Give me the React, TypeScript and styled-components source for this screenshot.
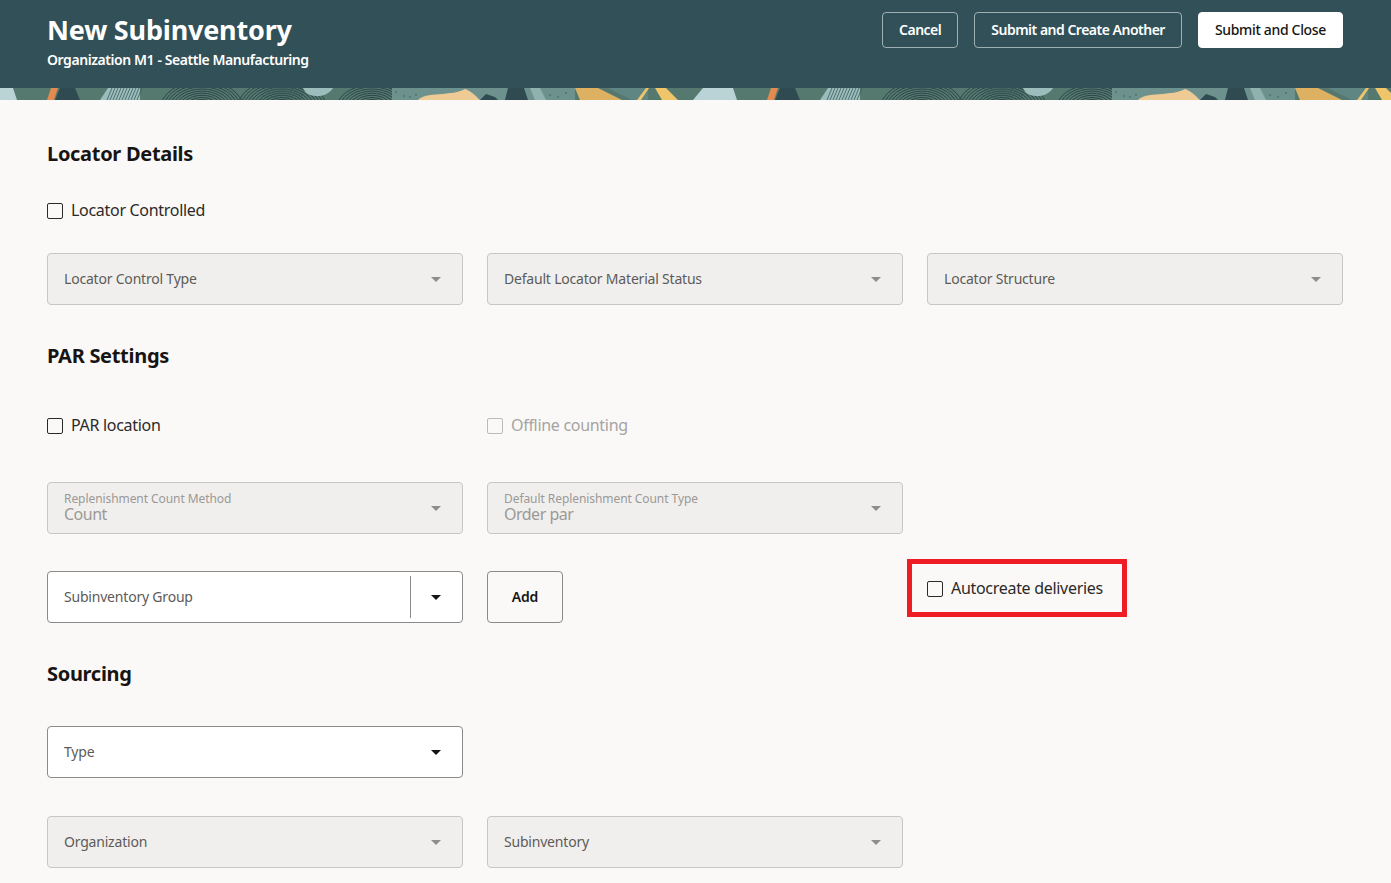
import React from 'react';
import styled, { createGlobalStyle } from 'styled-components';

const FONT = '"Noto Sans", "Open Sans", "Liberation Sans", sans-serif';

const GlobalStyle = createGlobalStyle`
  html, body {
    margin: 0;
    padding: 0;
    height: 883px;
    overflow: hidden;
    background: #fbf9f8;
    font-family: ${FONT};
    color: #161513;
  }
  * { box-sizing: border-box; }
`;

const Page = styled.div`
  width: 1391px;
  height: 883px;
  overflow: hidden;
`;

const Header = styled.header`
  height: 88px;
  background: #325057;
  padding: 12px 48px 0 47px;
  display: flex;
  justify-content: space-between;
  align-items: flex-start;
`;

const Titles = styled.div`
  color: #fff;
`;

const Title = styled.h1`
  margin: 0;
  font-size: 27px;
  line-height: 36px;
  font-weight: 700;
  letter-spacing: -0.2px;
`;

const Subtitle = styled.div`
  font-size: 14px;
  line-height: 20px;
  font-weight: 600;
  letter-spacing: -0.43px;
  margin-top: 2px;
`;

const Actions = styled.div`
  display: flex;
  gap: 16px;
`;

const HeaderButton = styled.button<{ $solid?: boolean }>`
  height: 36px;
  padding: 0 16px 2px;
  border-radius: 4px;
  font-family: ${FONT};
  font-size: 14px;
  font-weight: ${p => (p.$solid ? 500 : 600)};
  letter-spacing: ${p => (p.$solid ? '-0.33px' : '-0.5px')};
  color: ${p => (p.$solid ? '#161513' : '#fff')};
  background: ${p => (p.$solid ? '#fff' : 'transparent')};
  border: 1px solid ${p => (p.$solid ? '#fff' : '#9fb0b3')};
`;

const Banner = styled.div`
  height: 12px;
  overflow: hidden;
  display: flex;
  background: #55796f;
`;

// concentric rings of the fingerprint motif, cut off by the banner height
const Rings = ({ cx, cy, from, to, step = 3 }: { cx: number; cy: number; from: number; to: number; step?: number }) => {
  const radii: number[] = [];
  for (let r = from; r <= to; r += step) radii.push(r);
  return (
    <g fill="none" stroke="#2c4548" strokeWidth="1">
      {radii.map(r => (
        <ellipse key={r} cx={cx} cy={cy} rx={r} ry={r * 0.7} />
      ))}
    </g>
  );
};

const Hatch = ({ x, to, stroke = '#3b5a5c' }: { x: number; to: number; stroke?: string }) => {
  const lines: number[] = [];
  for (let i = x; i <= to; i += 3) lines.push(i);
  return (
    <g stroke={stroke} strokeWidth="0.8">
      {lines.map(i => (
        <line key={i} x1={i} y1="0" x2={i - 5} y2="12" />
      ))}
    </g>
  );
};

const Spots = ({ at }: { at: [number, number][] }) => (
  <g fill="#4f7470">
    {at.map(([x, y]) => (
      <circle key={`${x}-${y}`} cx={x} cy={y} r="1" />
    ))}
  </g>
);

const BannerTile = () => (
  <svg width="720" height="12" viewBox="0 0 720 12" style={{ flex: 'none' }}>
    <rect width="720" height="12" fill="#55796f" />
    <path d="M0 0h13l4 12H0z" fill="#b9d3d6" />
    <path d="M47 12l4-12h7l-4 12z" fill="#e28a4f" />
    <path d="M55 12l5-12h15l5 12z" fill="#2f4a50" />
    <path d="M100 12l8-12h32v12z" fill="#9dbdbd" />
    <Hatch x={112} to={142} />
    <Rings cx={202} cy={22} from={12} to={42} />
    <Rings cx={282} cy={22} from={12} to={45} />
    <Hatch x={266} to={306} />
    <path d="M303 0h30c-3 5-10 9-18 8s-10-4-12-8z" fill="#9dbdbd" />
    <Rings cx={372} cy={22} from={12} to={36} />
    <rect x="392" width="183" height="12" fill="#6d928d" />
    <Spots at={[[404, 8], [410, 9], [416, 7], [396, 4], [550, 7], [558, 9], [566, 5]]} />
    <path d="M418 12c6-6 16-5 24-6s16-1 23-5c4 1 10 6 15 11z" fill="#eecb94" />
    <path d="M480 12l6-6 9 3 3 3z" fill="#2f4a50" />
    <path d="M508 0h16l4 12h-23z" fill="#2f4a50" />
    <path d="M530 0h10l6 12h-11z" fill="#8fb1b0" />
    <path d="M575 0h23l22 11 2 1h-42z" fill="#deb062" />
    <path d="M608 0h40v12h-16z" fill="#5f8682" />
    <path d="M637 12l9-12h3l-8 12zM655 0h11l12 12h-16z" fill="#f0c468" />
    <path d="M693 12l10-12h17v12z" fill="#b9d3d6" />
  </svg>
);

const Content = styled.main`
  padding: 0 48px 0 47px;
`;

const SectionTitle = styled.h2<{ $top: number; $bottom: number }>`
  margin: ${p => p.$top}px 0 ${p => p.$bottom}px;
  font-size: 20px;
  line-height: 28px;
  font-weight: 700;
  letter-spacing: -0.3px;
`;

const Row = styled.div<{ $bottom?: number }>`
  display: grid;
  grid-template-columns: repeat(3, 416px);
  column-gap: 24px;
  align-items: center;
  margin-bottom: ${p => p.$bottom ?? 0}px;
`;

const CheckRow = styled.label<{ $disabled?: boolean }>`
  display: flex;
  align-items: center;
  gap: 8px;
  height: 24px;
  font-size: 16px;
  letter-spacing: -0.3px;
  color: ${p => (p.$disabled ? '#a5a4a2' : '#2b2a28')};
`;

const Box = styled.span<{ $disabled?: boolean }>`
  width: 16px;
  height: 16px;
  margin-top: 1px;
  border-radius: 2px;
  border: 1.5px solid ${p => (p.$disabled ? '#bdbbb8' : '#2b2a28')};
`;

const Field = styled.div<{ $enabled?: boolean }>`
  height: 52px;
  padding: 0 16px;
  display: flex;
  align-items: center;
  justify-content: space-between;
  border-radius: 4px;
  background: ${p => (p.$enabled ? '#fff' : '#f1efed')};
  border: 1px solid ${p => (p.$enabled ? '#8b8a88' : '#c9c7c5')};
`;

const FieldLabel = styled.span`
  margin-top: -2px;
  font-size: 14px;
  letter-spacing: -0.2px;
  color: #5c5b59;
`;

const FieldStack = styled.div`
  display: flex;
  flex-direction: column;
  margin-top: -2px;
`;

const SmallLabel = styled.span`
  font-size: 12px;
  line-height: 14px;
  letter-spacing: -0.07px;
  color: #9a9997;
`;

const FieldValue = styled.span`
  font-size: 16px;
  line-height: 17px;
  letter-spacing: -0.5px;
  color: #9a9997;
`;

const Caret = styled.span<{ $dark?: boolean }>`
  width: 0;
  height: 0;
  margin-right: 5px;
  border-left: 5px solid transparent;
  border-right: 5px solid transparent;
  border-top: 5px solid ${p => (p.$dark ? '#161513' : '#8e8d8b')};
`;

const ComboField = styled(Field)`
  padding-right: 0;
`;

const ComboToggle = styled.div`
  width: 52px;
  height: 42px;
  border-left: 1px solid #8b8a88;
  display: flex;
  align-items: center;
  justify-content: center;
  padding-left: 4px;
`;

const AddButton = styled.button`
  width: 76px;
  height: 52px;
  padding-bottom: 2px;
  border-radius: 4px;
  border: 1px solid #8b8a88;
  background: transparent;
  font-family: ${FONT};
  font-size: 14px;
  font-weight: 600;
  letter-spacing: -0.2px;
  color: #161513;
`;

const Highlight = styled.div`
  align-self: start;
  width: 220px;
  height: 58px;
  margin: -12px 0 0 -20px;
  padding-left: 15px;
  border: 5px solid #ee1c25;
  display: flex;
  align-items: center;
`;

const SelectField = ({ label }: { label: string }) => (
  <Field>
    <FieldLabel>{label}</FieldLabel>
    <Caret />
  </Field>
);

const FilledField = ({ label, value }: { label: string; value: string }) => (
  <Field>
    <FieldStack>
      <SmallLabel>{label}</SmallLabel>
      <FieldValue>{value}</FieldValue>
    </FieldStack>
    <Caret />
  </Field>
);

export default function App() {
  return (
    <Page>
      <GlobalStyle />
      <Header>
        <Titles>
          <Title>New Subinventory</Title>
          <Subtitle>Organization M1 - Seattle Manufacturing</Subtitle>
        </Titles>
        <Actions>
          <HeaderButton>Cancel</HeaderButton>
          <HeaderButton>Submit and Create Another</HeaderButton>
          <HeaderButton $solid>Submit and Close</HeaderButton>
        </Actions>
      </Header>
      <Banner>
        <BannerTile />
        <BannerTile />
      </Banner>
      <Content>
        <SectionTitle $top={40} $bottom={30}>Locator Details</SectionTitle>
        <Row $bottom={31}>
          <CheckRow><Box />Locator Controlled</CheckRow>
        </Row>
        <Row>
          <SelectField label="Locator Control Type" />
          <SelectField label="Default Locator Material Status" />
          <SelectField label="Locator Structure" />
        </Row>
        <SectionTitle $top={37} $bottom={43}>PAR Settings</SectionTitle>
        <Row $bottom={45}>
          <CheckRow><Box />PAR location</CheckRow>
          <CheckRow $disabled><Box $disabled />Offline counting</CheckRow>
        </Row>
        <Row $bottom={37}>
          <FilledField label="Replenishment Count Method" value="Count" />
          <FilledField label="Default Replenishment Count Type" value="Order par" />
        </Row>
        <Row>
          <ComboField $enabled>
            <FieldLabel>Subinventory Group</FieldLabel>
            <ComboToggle><Caret $dark /></ComboToggle>
          </ComboField>
          <AddButton>Add</AddButton>
          <Highlight>
            <CheckRow><Box />Autocreate deliveries</CheckRow>
          </Highlight>
        </Row>
        <SectionTitle $top={37} $bottom={38}>Sourcing</SectionTitle>
        <Row $bottom={38}>
          <Field $enabled>
            <FieldLabel>Type</FieldLabel>
            <Caret $dark />
          </Field>
        </Row>
        <Row>
          <SelectField label="Organization" />
          <SelectField label="Subinventory" />
        </Row>
      </Content>
    </Page>
  );
}
